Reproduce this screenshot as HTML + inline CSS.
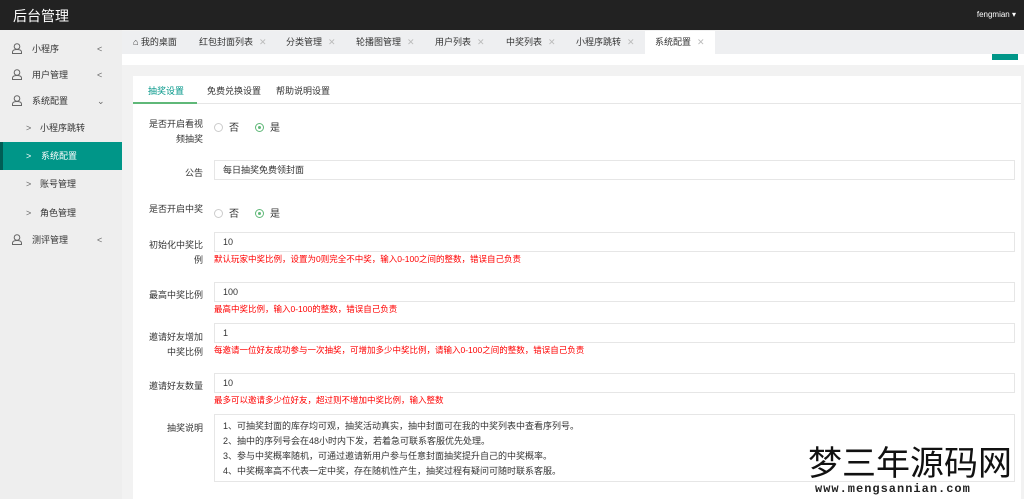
<!DOCTYPE html>
<html><head><meta charset="utf-8"><style>
*{margin:0;padding:0;box-sizing:border-box}
body{width:1024px;height:499px;overflow:hidden;background:#f2f2f2;font-family:"Liberation Sans","Noto Sans CJK SC",sans-serif;font-size:9px;color:#333;position:relative}
.hd{position:absolute;left:0;top:0;width:1024px;height:30px;background:#222}
.hd .t{position:absolute;left:13px;top:6px;color:#fff;font-size:14px}
.hd .u{position:absolute;right:8px;top:10px;color:#fff;font-size:8px}
.side{position:absolute;left:0;top:30px;width:122px;height:469px;background:#eee}
.si{position:absolute;left:0;width:122px;height:28px;line-height:28px;color:#333}
.si .ic{position:absolute;left:12px;top:8px;width:10px;height:11px}
.si .lb{position:absolute;left:32px}
.si .ar{position:absolute;left:97px;color:#666}
.sub .lb{left:40px}
.sub .ar{left:26px}
.act{background:#009688;color:#fff;border-left:3px solid #005e55}
.act .ar{color:#fff}
.tabs{position:absolute;left:122px;top:31px;width:902px;height:23px;background:#eeeff1}
.tab{position:absolute;top:0;height:23px;line-height:23px;color:#333;font-size:9px;white-space:nowrap}
.tab .x{color:#bbb;margin-left:6px}
.strip{position:absolute;left:122px;top:54px;width:902px;height:11px;background:#fff}
.card{position:absolute;left:133px;top:76px;width:888px;height:423px;background:#fff}
.nav{position:absolute;left:0;top:0;width:888px;height:28px;border-bottom:1px solid #e6e6e6}
.nav span{position:absolute;top:8px}
.lab{position:absolute;right:818px;text-align:right;line-height:15px;color:#333;width:70px}
.inp{position:absolute;left:81px;width:801px;height:20px;border:1px solid #e6e6e6;padding-left:8px;line-height:18px}
.hint{position:absolute;left:81px;color:#f00;font-size:8.5px}
.rad{position:absolute;left:81px}
.rc{display:inline-block;width:9px;height:9px;border:1px solid #ccc;border-radius:50%;vertical-align:-1px;margin-right:6px;position:relative}
.rc.on{border-color:#5fb878}
.rc.on:after{content:"";position:absolute;left:2px;top:2px;width:3px;height:3px;border-radius:50%;background:#5fb878}
.wm{position:absolute;left:808px;top:443px;font-size:34px;color:#111;font-family:"Noto Sans CJK SC",sans-serif;line-height:36px}
.wm2{position:absolute;left:815px;top:482px;font-family:"Liberation Mono",monospace;font-size:12px;font-weight:bold;color:#222;letter-spacing:1px}
</style></head><body>
<div class="hd"><div class="t">后台管理</div><div class="u">fengmian ▾</div></div>
<div class="side">
<div class="si" style="top:5px"><svg class="ic" viewBox="0 0 10 11"><circle cx="5" cy="3.5" r="2.8" fill="none" stroke="#666"/><path d="M0.5 10.5v-1.5q0-2.5 4.5-2.5t4.5 2.5v1.5z" fill="none" stroke="#666"/></svg><span class="lb">小程序</span><span class="ar">&lt;</span></div>
<div class="si" style="top:31px"><svg class="ic" viewBox="0 0 10 11"><circle cx="5" cy="3.5" r="2.8" fill="none" stroke="#666"/><path d="M0.5 10.5v-1.5q0-2.5 4.5-2.5t4.5 2.5v1.5z" fill="none" stroke="#666"/></svg><span class="lb">用户管理</span><span class="ar">&lt;</span></div>
<div class="si" style="top:57px"><svg class="ic" viewBox="0 0 10 11"><circle cx="5" cy="3.5" r="2.8" fill="none" stroke="#666"/><path d="M0.5 10.5v-1.5q0-2.5 4.5-2.5t4.5 2.5v1.5z" fill="none" stroke="#666"/></svg><span class="lb">系统配置</span><span class="ar">⌄</span></div>
<div class="si sub" style="top:84px"><span class="ar">&gt;</span><span class="lb">小程序跳转</span></div>
<div class="si sub act" style="top:112px"><span class="ar" style="left:23px">&gt;</span><span class="lb" style="left:38px">系统配置</span></div>
<div class="si sub" style="top:140px"><span class="ar">&gt;</span><span class="lb">账号管理</span></div>
<div class="si sub" style="top:169px"><span class="ar">&gt;</span><span class="lb">角色管理</span></div>
<div class="si" style="top:196px"><svg class="ic" viewBox="0 0 10 11"><circle cx="5" cy="3.5" r="2.8" fill="none" stroke="#666"/><path d="M0.5 10.5v-1.5q0-2.5 4.5-2.5t4.5 2.5v1.5z" fill="none" stroke="#666"/></svg><span class="lb">测评管理</span><span class="ar">&lt;</span></div>
</div>
<div class="tabs">
<div class="tab" style="left:11px">⌂ 我的桌面</div>
<div class="tab" style="left:77px">红包封面列表<span class="x">✕</span></div>
<div class="tab" style="left:164px">分类管理<span class="x">✕</span></div>
<div class="tab" style="left:234px">轮播图管理<span class="x">✕</span></div>
<div class="tab" style="left:313px">用户列表<span class="x">✕</span></div>
<div class="tab" style="left:384px">中奖列表<span class="x">✕</span></div>
<div class="tab" style="left:454px">小程序跳转<span class="x">✕</span></div>
<div class="tab" style="left:523px;width:70px;background:#fff;padding-left:10px">系统配置<span class="x">✕</span></div>
</div>
<div class="strip"><div style="position:absolute;left:870px;top:0;width:26px;height:6px;background:#009688"></div></div>
<div class="card">
<div class="nav"><span style="left:15px;color:#009688">抽奖设置</span><span style="left:74px">免费兑换设置</span><span style="left:143px">帮助说明设置</span>
<div style="position:absolute;left:0;top:26px;width:64px;height:2px;background:#5fb878"></div></div>
<div class="lab" style="top:41px">是否开启看视<br>频抽奖</div>
<div class="rad" style="top:43px"><span class="rc"></span><span style="font-size:10px">否</span><span class="rc on" style="margin-left:16px"></span><span style="font-size:10px">是</span></div>
<div class="lab" style="top:90px">公告</div>
<div class="inp" style="top:84px">每日抽奖免费领封面</div>
<div class="lab" style="top:126px">是否开启中奖</div>
<div class="rad" style="top:129px"><span class="rc"></span><span style="font-size:10px">否</span><span class="rc on" style="margin-left:16px"></span><span style="font-size:10px">是</span></div>
<div class="lab" style="top:162px">初始化中奖比<br>例</div>
<div class="inp" style="top:156px">10</div>
<div class="hint" style="top:177px">默认玩家中奖比例，设置为0则完全不中奖，输入0-100之间的整数，错误自己负责</div>
<div class="lab" style="top:212px">最高中奖比例</div>
<div class="inp" style="top:206px">100</div>
<div class="hint" style="top:227px">最高中奖比例，输入0-100的整数，错误自己负责</div>
<div class="lab" style="top:254px">邀请好友增加<br>中奖比例</div>
<div class="inp" style="top:247px">1</div>
<div class="hint" style="top:268px">每邀请一位好友成功参与一次抽奖，可增加多少中奖比例，请输入0-100之间的整数，错误自己负责</div>
<div class="lab" style="top:303px">邀请好友数量</div>
<div class="inp" style="top:297px">10</div>
<div class="hint" style="top:318px">最多可以邀请多少位好友，超过则不增加中奖比例，输入整数</div>
<div class="lab" style="top:345px">抽奖说明</div>
<div class="inp" style="top:338px;height:68px;line-height:15px;padding-top:4px">1、可抽奖封面的库存均可观，抽奖活动真实，抽中封面可在我的中奖列表中查看序列号。<br>2、抽中的序列号会在48小时内下发，若着急可联系客服优先处理。<br>3、参与中奖概率随机，可通过邀请新用户参与任意封面抽奖提升自己的中奖概率。<br>4、中奖概率高不代表一定中奖，存在随机性产生，抽奖过程有疑问可随时联系客服。</div>
</div>
<div class="wm">梦三年源码网</div>
<div class="wm2">www.mengsannian.com</div>
</body></html>
